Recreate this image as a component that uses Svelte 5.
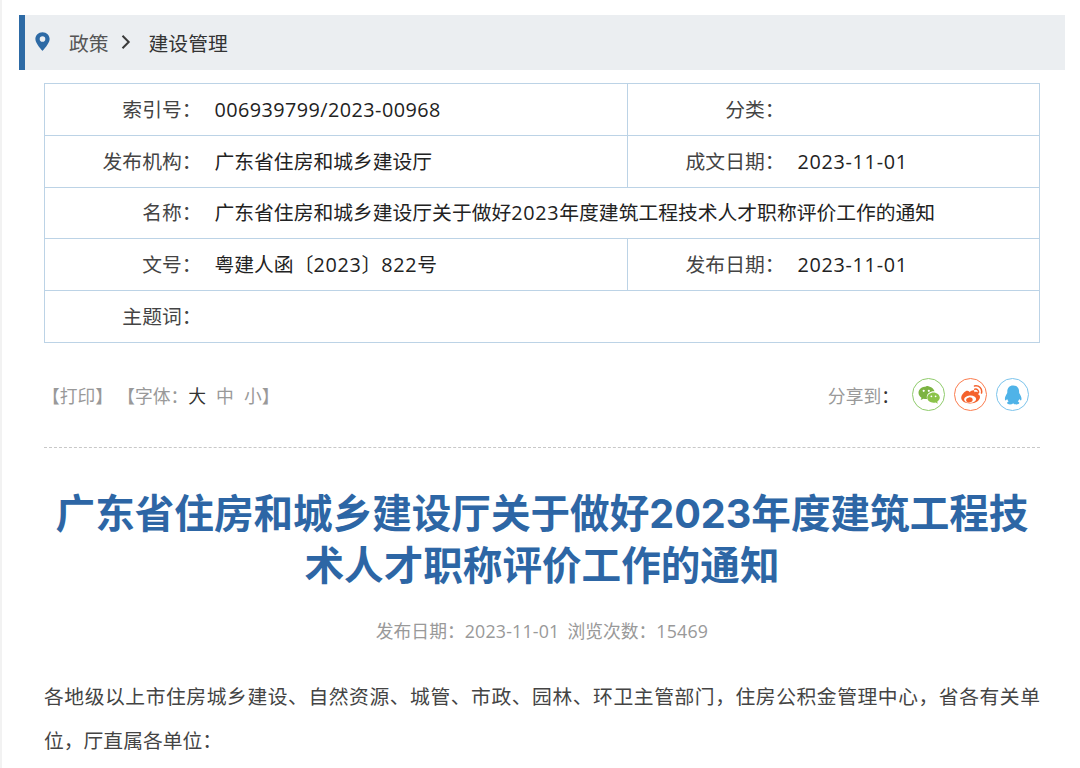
<script>
	// Article page: breadcrumb, info table, tools row, title and body
	const font = ['大', '中', '小'];
</script>

<div class="page">
	<div class="crumb">
		<svg class="pin" viewBox="0 0 16 20" width="15" height="19">
			<path fill="#2d6aa5" fill-rule="evenodd" d="M8 0C3.600 0 .4 3.300.4 7.400.4 12.500 8 20 8 20s7.600-7.500 7.600-12.600C15.600 3.300 12.400 0 8 0zm0 10.300a3 3 0 1 1 0-6 3 3 0 0 1 0 6z" />
		</svg>
		<span class="crumb-link">政策</span>
		<svg class="chev" viewBox="0 0 10 14" width="10" height="14">
			<path fill="none" stroke="#3a3a3a" stroke-width="2" d="M1.500 .8 7.700 7 1.500 13.200" />
		</svg>
		<span class="crumb-cur">建设管理</span>
	</div>

	<main class="main">
		<table class="info">
			<colgroup>
				<col class="c1" /><col class="c2" /><col class="c3" /><col />
			</colgroup>
			<tbody>
				<tr>
					<th>索引号：</th><td><span class="num index">006939799/2023-00968</span></td>
					<th class="th2">分类：</th><td></td>
				</tr>
				<tr>
					<th>发布机构：</th><td>广东省住房和城乡建设厅</td>
					<th class="th2">成文日期：</th><td><span class="num">2023-11-01</span></td>
				</tr>
				<tr>
					<th>名称：</th><td colspan="3">广东省住房和城乡建设厅关于做好<span class="num">2023</span>年度建筑工程技术人才职称评价工作的通知</td>
				</tr>
				<tr>
					<th>文号：</th><td>粤建人函〔<span class="num">2023</span>〕<span class="num">822</span>号</td>
					<th class="th2">发布日期：</th><td><span class="num">2023-11-01</span></td>
				</tr>
				<tr>
					<th>主题词：</th><td colspan="3"></td>
				</tr>
			</tbody>
		</table>

		<div class="tools">
			<div class="tools-left">
				<span>【打印】</span>
				<span class="size">【字体：</span>
				{#each font as f, i}
					<span class="size-item" class:active={i === 0}>{f}</span>
				{/each}
				<span class="close">】</span>
			</div>
			<div class="share">
				<span class="share-label">分享到<b>：</b></span>
				<span class="share-btn wx">
					<svg viewBox="0 0 24 24" width="24" height="24">
						<path fill="#7cb342" d="M9.300 3.500C5 3.500 1.500 6.300 1.500 9.800c0 2 1.200 3.800 3 5l-.8 2.300 2.800-1.400c1 .3 1.900.4 2.800.4l.8-.1c-.2-.6-.3-1.200-.3-1.800 0-3.300 3.200-5.900 7.100-5.900h.6c-.8-3-4.200-5.300-8.200-5.300z" />
						<circle cx="6.700" cy="7.800" r="1.100" fill="#fff" />
						<circle cx="11.800" cy="7.800" r="1.100" fill="#fff" />
						<path fill="#8bc34a" d="M22.800 14.600c0-2.900-2.900-5.200-6.300-5.200s-6.300 2.300-6.300 5.200 2.900 5.200 6.300 5.200c.7 0 1.500-.1 2.200-.3l2.100 1.200-.6-2c1.600-1 2.600-2.500 2.600-4.100z" />
						<circle cx="14.400" cy="13.300" r=".9" fill="#fff" />
						<circle cx="18.600" cy="13.300" r=".9" fill="#fff" />
					</svg>
				</span>
				<span class="share-btn wb">
					<svg viewBox="0 0 24 24" width="24" height="24">
						<path fill="#f4622d" fill-rule="evenodd" d="M10.300 9.300c1.900-1.800 4-2.600 4.800-1.800.4.400.4 1 .2 1.800 1.700-.7 3.400-.6 3.900.4.300.6.200 1.200-.1 1.900 1.100.4 1.900 1.100 1.900 2.400 0 3-4 6.500-10 6.500-4.600 0-8.800-2.200-8.800-5.700 0-1.800 1.100-3.700 3-5.600 1.500-1.400 3.300-2.100 5.100-.8zm.5 3.200c-3.300.3-5.800 2.200-5.600 4.300.2 2.100 3 3.500 6.300 3.200s5.800-2.200 5.600-4.300c-.2-2-3-3.500-6.300-3.200zm-.8 1.900c1.800-.3 3.500.6 3.700 2 .2 1.400-1.100 2.700-2.900 3-1.800.3-3.500-.6-3.700-2-.2-1.400 1.100-2.700 2.900-3z" />
						<path fill="none" stroke="#f4622d" stroke-width="1.500" stroke-linecap="round" d="M15.700 6.200c2.500-.5 4.300 1.300 3.800 3.500M15.500 3c4.700-.8 8 2.700 7 7" />
					</svg>
				</span>
				<span class="share-btn qq">
					<svg viewBox="0 0 24 24" width="24" height="24">
						<path fill="#4fb3e8" d="M12 2.500c-3.700 0-5.700 2.700-5.700 6 0 .7 0 1.300-.2 1.800-1 1.600-2.200 3.600-2.200 5.500 0 1 .3 1.600.7 1.600.4 0 1-.5 1.500-1.300.2 1 .8 1.800 1.500 2.500-.9.300-1.500.9-1.500 1.500 0 .9 1.400 1.400 3 1.400 1.300 0 2.400-.4 2.900-.9h.4c.5.500 1.600.9 2.900.9 1.600 0 3-.5 3-1.400 0-.6-.6-1.200-1.500-1.500.7-.7 1.300-1.500 1.500-2.500.5.800 1.100 1.300 1.500 1.300.4 0 .7-.6.700-1.600 0-1.900-1.200-3.900-2.200-5.500-.2-.5-.2-1.100-.2-1.800 0-3.300-2-6-5.700-6z" />
					</svg>
				</span>
			</div>
		</div>

		<h1 class="title">广东省住房和城乡建设厅关于做好2023年度建筑工程技术人才职称评价工作的通知</h1>
		<div class="meta">发布日期：<span class="num">2023-11-01</span> &nbsp;浏览次数：<span class="num">15469</span></div>
		<p class="body-text">各地级以上市住房城乡建设、自然资源、城管、市政、园林、环卫主管部门，住房公积金管理中心，省各有关单位，厅直属各单位：</p>
	</main>
</div>

<style>
	:global(body) {
		margin: 0;
		background: #fff;
		overflow: hidden;
	}

	.page {
		box-sizing: border-box;
		width: 1080px;
		height: 768px;
		overflow: hidden;
		padding: 15px 15px 0 17px;
		border-left: 2px solid #f2f2f2;
		font-family: "Noto Sans CJK SC", "Noto Sans", sans-serif;
		color: #333;
	}

	/* digits in the reference run wider than the CJK font's own latin */
	.num {
		font-family: "Open Sans", "Noto Sans CJK SC", sans-serif;
		letter-spacing: 0.7px;
	}

	.num.index {
		letter-spacing: 0.45px;
	}

	.crumb {
		display: flex;
		align-items: center;
		height: 55px;
		background: #ebeef1;
		border-left: 6px solid #2d6aa5;
		font-size: 19.800px;
		color: #333;
	}

	.pin {
		margin: -2px 0 0 10px;
	}

	.crumb-link {
		margin-left: 19px;
		color: #555;
	}

	.chev {
		margin: -2px 0 0 12px;
	}

	.crumb-cur {
		margin-left: 18px;
	}

	.main {
		margin: 13px 25px 0 25px;
	}

	.info {
		width: 100%;
		border-collapse: collapse;
		table-layout: fixed;
		font-size: 19.800px;
	}

	.c1 {
		width: 170px;
	}

	.c2 {
		width: 413px;
	}

	.c3 {
		width: 170px;
	}

	.info th,
	.info td {
		border: 1px solid #bcd3e6;
		height: 50.700px;
		padding: 0 0 2px;
		box-sizing: border-box;
		font-weight: normal;
		color: #222;
		white-space: nowrap;
	}

	.info tr {
		height: 51.800px;
	}

	.info th {
		border-right: none;
		text-align: right;
		color: #444;
		padding-right: 13px;
	}

	.info td {
		border-left: none;
		padding-left: 0;
	}

	.tools {
		display: flex;
		justify-content: space-between;
		align-items: center;
		height: 105px;
		box-sizing: border-box;
		border-bottom: 1px dashed #c8c8c8;
		color: #999;
		font-size: 17.800px;
		padding: 0 11px 0 0;
	}

	.tools-left {
		display: flex;
		align-items: center;
		margin-left: -2px;
	}

	.size {
		margin-left: 4px;
	}

	.size-item {
		margin-right: 10px;
	}

	.size-item.active {
		color: #333;
	}

	.close {
		margin-left: -10px;
	}

	.share {
		display: flex;
		align-items: center;
	}

	.share-label b {
		font-weight: normal;
		color: #333;
	}

	.share-btn {
		box-sizing: border-box;
		display: flex;
		align-items: center;
		justify-content: center;
		width: 33px;
		height: 33px;
		border-radius: 50%;
		border: 1.500px solid;
		margin-left: 9px;
	}

	.share-label + .share-btn {
		margin-left: 13px;
	}

	.share-btn svg {
		width: 24px;
		height: 24px;
	}

	.wx {
		border-color: #8fcb6b;
	}

	.wb {
		border-color: #fb7c4e;
	}

	.qq {
		border-color: #7cc4ec;
	}

	.title {
		margin: 40px 0 0;
		font-family: Inter, "Noto Sans CJK SC", sans-serif;
		font-size: 39.600px;
		line-height: 52px;
		font-weight: 700;
		color: #2d66a5;
		text-align: center;
	}

	.meta {
		margin-top: 25px;
		text-align: center;
		font-size: 17.800px;
		color: #999;
	}

	.meta .num {
		letter-spacing: 0.2px;
	}

	.body-text {
		margin: 31px 0 0;
		font-size: 19.800px;
		line-height: 44px;
		color: #444;
		text-align: justify;
	}
</style>
